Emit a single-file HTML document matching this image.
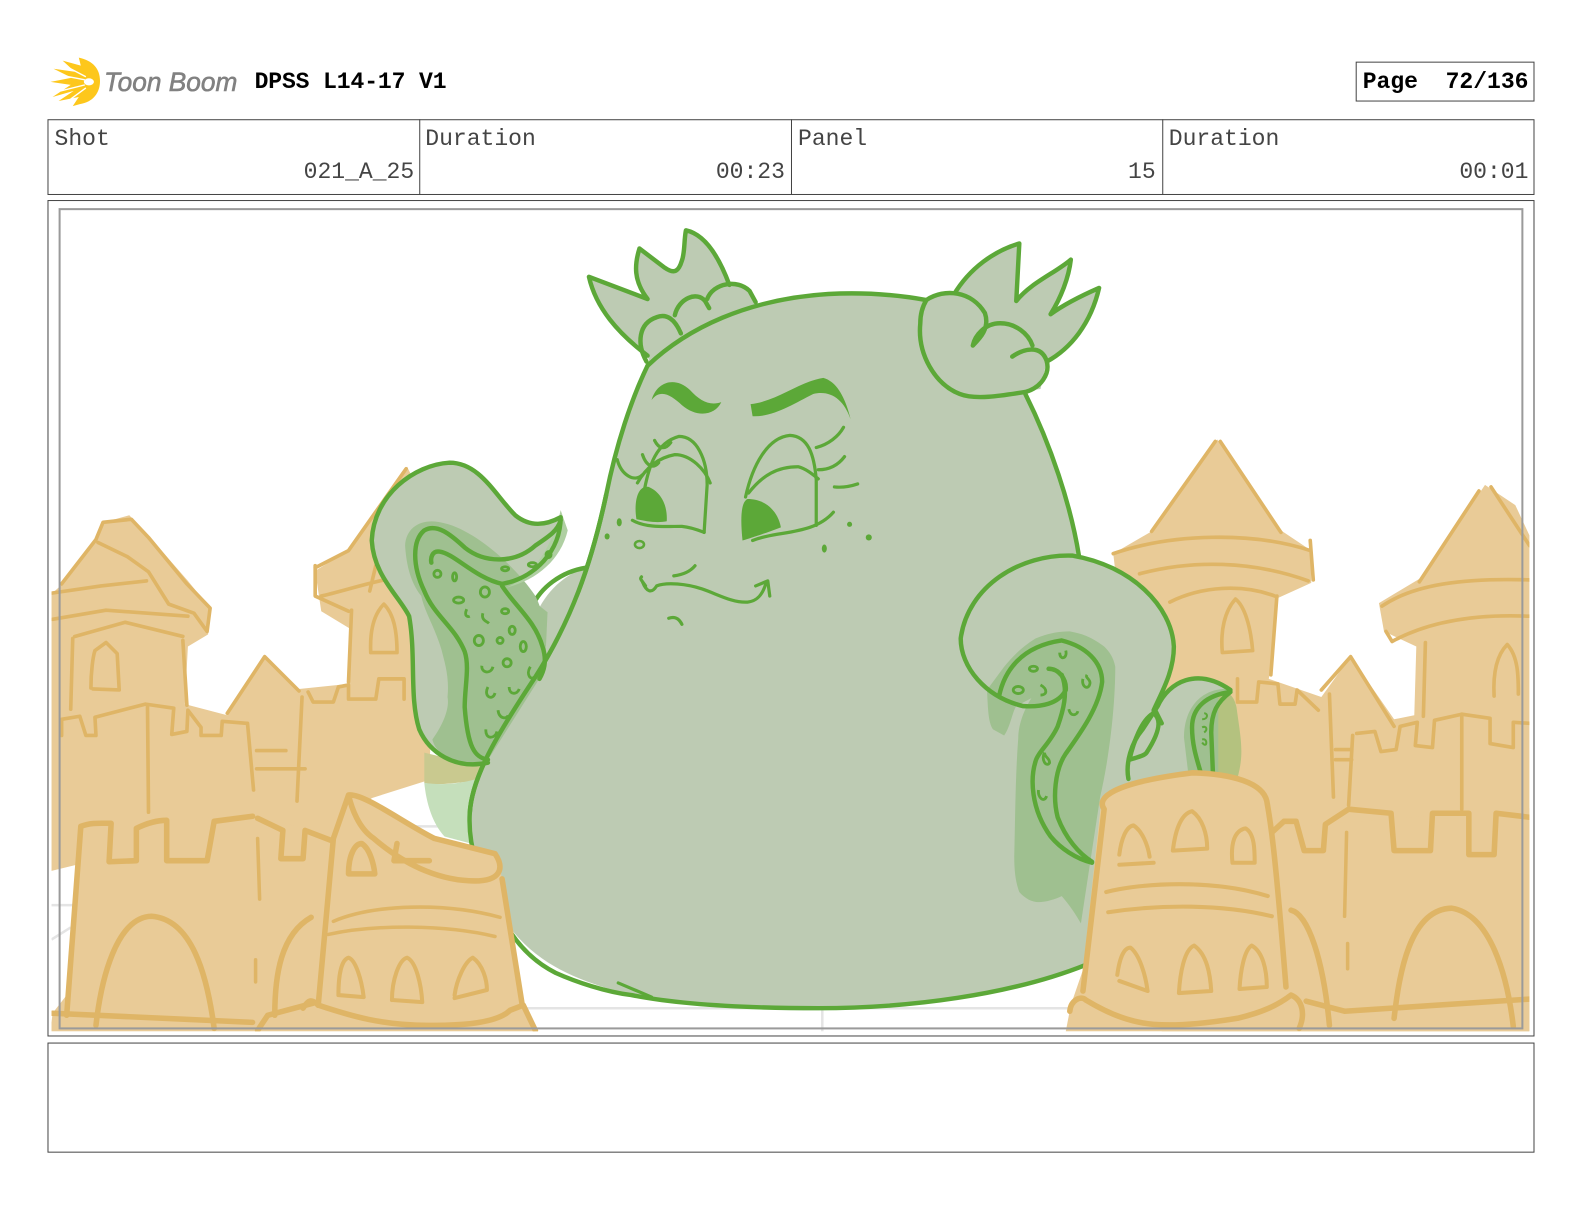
<!DOCTYPE html>
<html lang="en"><head><meta charset="utf-8"><title>DPSS L14-17 V1 - Page 72/136</title>
<style>
html,body{margin:0;padding:0;background:#fff}
svg{display:block}
.t{font-family:"Liberation Mono",monospace;font-size:22.8px;fill:#444}
.b{font-family:"Liberation Mono",monospace;font-size:22.8px;font-weight:bold;fill:#000}
.s{fill:none;stroke:#dfb566;stroke-width:5.5;stroke-linecap:round;stroke-linejoin:round}
.b3{fill:none;stroke:#dfb566;stroke-width:3.6;stroke-linecap:round;stroke-linejoin:round}
.s2{fill:none;stroke:#dfb566;stroke-width:3.5;stroke-linecap:round;stroke-linejoin:round}
.g{fill:none;stroke:#5ca838;stroke-width:4.4;stroke-linecap:round;stroke-linejoin:round}
.g2{fill:none;stroke:#5ca838;stroke-width:3.2;stroke-linecap:round;stroke-linejoin:round}
.f{fill:#5ca838}
</style></head><body>
<svg xmlns="http://www.w3.org/2000/svg" width="1584" height="1224" viewBox="0 0 1568 1211.6">
<defs><clipPath id="c"><rect x="51" y="205" width="1463" height="816"/></clipPath></defs>
<rect width="1568" height="1212" fill="#fff"/>

<!-- logo -->
<g fill="#fdc71c">
<path d="M99 80C99 92 92 101 79 103L72 105L78 96L58 100L73 90L52 96L70 84L50 81L71 77L53 68L74 71L62 60L80 65L78 57C92 60 99 68 99 80Z"/>
</g>
<ellipse cx="88" cy="81" rx="5" ry="3.5" fill="#fff"/>
<g stroke="#fff" stroke-width="1.4" fill="none"><path d="M85 76L66 66M84 79L58 74M84 84L60 90M85 87L70 98"/></g>
<text x="103" y="90" font-family="'Liberation Sans',sans-serif" font-style="italic" font-size="27" fill="#818181" stroke="#818181" stroke-width=".6" textLength="132" lengthAdjust="spacingAndGlyphs">Toon Boom</text>
<text x="252" y="87" class="b" textLength="190">DPSS L14-17 V1</text>
<rect x="1342.5" y="61.5" width="176" height="38.5" fill="none" stroke="#444" stroke-width="1"/>
<text x="1349" y="87" class="b" xml:space="preserve">Page  72/136</text>

<!-- table -->
<g fill="none" stroke="#444" stroke-width="1">
<rect x="47.5" y="118.5" width="1471" height="74"/>
<path d="M415.5 118V193M783.5 118V193M1151 118V193"/>
<rect x="47.5" y="198.5" width="1471" height="827"/>
<rect x="47.5" y="1032.5" width="1471" height="108"/>
</g>
<text x="54" y="143.500" class="t">Shot</text><text x="410" y="176" class="t" text-anchor="end">021_A_25</text>
<text x="421" y="143.500" class="t">Duration</text><text x="777" y="176" class="t" text-anchor="end">00:23</text>
<text x="790" y="143.500" class="t">Panel</text><text x="1144" y="176" class="t" text-anchor="end">15</text>
<text x="1157" y="143.500" class="t">Duration</text><text x="1513" y="176" class="t" text-anchor="end">00:01</text>

<g clip-path="url(#c)">
<!-- faint background lines -->
<g fill="none" stroke="#e4e4e4" stroke-width="2.5">
<path d="M51 896H72M51 930L70 918M400 818H470M520 998H1060M814 998V1021"/>
</g>

<!-- back sand left -->
<path fill="#e9cb97" d="M51 588L62 578L95 534L103 517L128 510L145 528L186 575L208 602L206 628L186 640L183 697L225 708L262 648L296 682L345 677L346 622L318 605L312 565L345 545L403 462L432 520L425 772L368 790L330 830L80 855L51 862Z"/>
<!-- back sand right -->
<path fill="#e9cb97" d="M1102 548L1140 526L1205 435L1268 525L1298 545L1298 577L1265 592L1256 672L1308 690L1337 650L1380 712L1400 708L1402 640L1370 625L1365 597L1410 570L1470 480L1500 500L1514 530V1021H1150L1120 700Z"/>

<g class="b3">
<path d="M61 578L95 534L102 517L130 514L147 532L185 578L208 602L205 625L192 607L167 598L147 566L126 551L97 537"/>
<path d="M52 587L100 580L145 575M52 613L105 604L186 610"/>
<path d="M72 632L70 702M181 634L185 698M74 630L124 616L181 630"/>
<path d="M90 681C90 665 92 650 94 644L105 636L116 647L118 683L92 682"/>
<path d="M61 728V712L79 709L85 728L95 728L94 710L144 697L172 701L170 727L185 724L186 703L199 720V728L219 728L220 714L244 716"/>
<path d="M245 716L251 782M146 698L147 804"/>
<path d="M254 743H283M254 761H302M299 690L294 793"/>
<path d="M225 706L262 650L296 684"/>
<path d="M305 685L310 695H330L335 680L345 678L345 692H372L375 672H400V692"/>
<path d="M345 675L348 604M312 560V590L345 605M312 562L345 545L402 464"/>
<path d="M318 590C340 585 370 575 400 570M366 585L372 560"/>
<path d="M367 646C366 625 370 608 380 598C390 608 393 625 393 646Z"/>
</g>

<!-- right back strokes -->
<g class="b3">
<path d="M1140 526L1203 437M1208 437L1268 527"/>
<path d="M1102 548C1160 528 1240 526 1297 545M1297 535L1300 574"/>
<path d="M1128 568C1180 554 1240 555 1295 575"/>
<path d="M1158 596C1190 580 1230 578 1262 590M1264 590L1258 668"/>
<path d="M1210 646C1208 625 1212 605 1223 593C1232 600 1238 620 1240 644Z"/>
<path d="M1225 672V695H1244L1246 675L1265 677L1267 697H1282L1284 683L1305 703M1316 687L1320 789"/>
<path d="M1308 683L1337 650L1380 719"/>
<path d="M1405 576L1464 486M1476 482L1514 540"/>
<path d="M1368 600C1400 578 1450 572 1514 574M1372 625L1378 635C1420 612 1470 608 1514 610"/>
<path d="M1411 636L1409 709"/>
<path d="M1479 689C1478 670 1480 650 1492 638C1503 650 1503 670 1503 687"/>
<path d="M1343 726L1361 724L1367 744L1382 742L1386 719L1403 715L1401 738L1418 740L1420 713L1447 707L1475 711L1475 736L1498 740L1498 715L1514 716"/>
<path d="M1339 728L1335 797M1447 707L1447 801M1322 742H1338M1322 752H1338"/>
</g>

<!-- left green patches -->
<path fill="#c9c98f" d="M420 745L482 760L472 773C450 775 432 778 420 775Z"/>
<path fill="#c5dfbb" d="M420 775C440 778 460 775 475 770L466 835L440 828C428 815 422 795 420 775Z"/>

<!-- horns left -->
<path fill="#bdcbb3" d="M641 352C612 330 590 305 583 274L641 296C627 278 628 262 633 246L658 265C668 272 672 268 675 258C678 250 677 238 679 228C698 232 712 255 722 282C738 282 746 290 750 300L760 420L660 420Z"/>
<path class="g" d="M641 352C612 330 590 305 583 274L641 296C627 278 628 262 633 246L658 265C668 272 672 268 675 258C678 250 677 238 679 228C698 232 712 255 722 282"/>
<path class="g" d="M640 358C630 340 632 320 650 314C660 310 668 316 674 330M668 312C672 295 690 288 698 298L702 305M700 296C706 280 730 276 742 288L748 299"/>

<!-- horns right -->
<path fill="#bdcbb3" d="M944 292C960 265 985 248 1009 241L1006 298C1020 280 1045 270 1060 257C1058 275 1050 295 1040 311C1055 300 1072 292 1088 285C1080 320 1060 345 1036 358L1030 385L960 394L912 360L908 320L920 295Z"/>
<path class="g" d="M944 292C960 265 985 248 1009 241L1006 298C1020 280 1045 270 1060 257C1058 275 1050 295 1040 311C1055 300 1072 292 1088 285C1080 320 1060 345 1036 358"/>

<!-- body -->
<path fill="#bdcbb3" d="M641 362C680 325 740 296 820 291C860 289 890 292 917 297L1015 390C1040 440 1060 500 1068 550L1120 900L1075 955C1000 985 900 998 810 998C720 998 640 990 600 978C560 965 525 950 495 905C475 870 463 840 465 805C467 770 490 730 530 670C565 615 585 560 600 490C610 440 625 395 641 362Z"/>
<path class="g" d="M641 362C680 325 740 296 820 291C860 289 890 292 917 297"/>
<path class="g" d="M1015 390C1040 440 1060 500 1068 550"/>
<path class="g" d="M1075 955C1000 985 900 998 810 998C730 998 670 994 625 985C600 982 570 972 550 963C530 953 510 935 495 905C475 870 463 840 465 805C467 770 490 730 530 670C565 615 585 560 600 490C610 440 625 395 641 362"/>
<path class="g2" d="M612 973L645 987"/>

<!-- bun right -->
<path fill="#bdcbb3" d="M917 297C935 285 960 288 972 305L985 320C1005 318 1025 330 1030 345C1040 355 1036 375 1015 388C990 395 960 393 950 390C925 380 910 355 911 320Z"/>
<path class="g" d="M917 297C935 285 962 288 975 310C980 325 970 335 963 342C965 332 975 320 990 320C1005 320 1018 330 1022 342M1002 353C1012 346 1030 340 1036 357C1040 370 1030 384 1015 388C990 392 965 396 950 390C925 380 908 350 911 320C911 310 914 302 917 297"/>

<!-- brows -->
<path class="f" d="M645 396C650 378 668 372 683 386C693 397 703 402 714 398C708 411 690 414 675 401C665 392 654 384 645 396Z"/>
<path class="f" d="M743 400C770 397 790 378 815 374C830 378 838 398 842 415C835 395 822 386 805 390C785 400 765 413 745 412Z"/>

<!-- left eye -->
<path class="g2" d="M637 490C642 460 650 438 672 432C690 432 700 455 700 480L697 527"/>
<path class="g2" d="M631 478C640 462 652 453 668 450C684 450 698 465 703 478"/>
<path class="g2" d="M626 515C640 523 660 521 675 521C685 522 692 525 697 527"/>
<path class="f" d="M630 514C627 495 632 480 642 482C654 487 661 500 660 516C650 518 640 516 630 514Z"/>
<path class="g2" d="M611 455C615 470 628 478 636 470M636 450C640 462 647 464 652 458M648 436C652 444 658 446 664 438"/>
<!-- right eye -->
<path class="g2" d="M738 492C745 460 760 433 782 431C800 432 806 450 808 475L808 520"/>
<path class="g2" d="M741 488C755 470 770 462 790 462C798 464 805 470 810 474"/>
<path class="g2" d="M745 535C770 525 805 530 825 507"/>
<path class="f" d="M735 535C733 515 733 497 740 494C758 494 770 506 773 522C760 527 745 532 735 535Z"/>
<path class="g2" d="M808 443C820 440 830 432 835 423M810 465C822 465 830 460 836 452M826 482C835 483 843 481 849 479" />
<!-- freckles -->
<g class="f">
<ellipse cx="613" cy="517" rx="2.5" ry="4"/><ellipse cx="601" cy="531" rx="2.5" ry="3"/>
<ellipse cx="841" cy="519" rx="2.5" ry="2.5"/><ellipse cx="860" cy="532" rx="3" ry="3"/><ellipse cx="816" cy="543" rx="2.5" ry="4"/>
</g>
<ellipse cx="633" cy="539" rx="4.5" ry="3.5" fill="#bdcbb3" stroke="#5ca838" stroke-width="2.5"/>
<!-- mouth -->
<path class="g2" d="M639 580C635 574 633 573 635 571M636 576C640 586 645 588 650 580C660 576 680 578 695 583C710 588 725 597 740 596C750 595 755 588 758 578M748 580L760 575L762 590M667 570C675 569 683 566 688 560M662 612C668 610 672 612 675 618"/>

<!-- left arm -->
<path fill="#bdcbb3" d="M530 610C540 585 560 568 580 562L568 610L540 655Z"/>
<path fill="#9fc090" d="M524 592L542 606L540 650L530 660Z"/>
<path class="g" d="M527 600C535 582 555 566 580 562"/>

<!-- left tentacle -->
<path fill="#bdcbb3" d="M480 755C450 760 425 745 415 720C405 690 410 650 405 610C395 590 370 570 368 535C370 490 410 460 445 458C475 458 490 490 510 510C525 522 540 520 555 510C555 540 540 560 500 580L540 640L535 670L480 755Z"/>
<path fill="#9fc090" d="M401 540C402 520 420 512 440 518C470 525 510 560 530 590C545 620 540 650 535 670L480 757L445 752C435 745 430 740 428 732C440 715 445 700 443 690C445 670 440 655 437 643C430 620 420 605 417 590C405 575 402 555 401 540Z"/>
<path fill="#afcfa2" d="M555 505L562 525C555 555 530 575 500 582C520 575 545 550 555 505Z"/>
<path class="g" d="M483 755C450 762 425 745 415 722C405 690 412 650 405 610C395 590 370 570 368 535C370 490 410 460 445 458C475 458 490 490 510 510C525 522 540 520 555 512C555 545 530 572 497 578C470 572 450 548 435 546C428 545 426 552 427 557"/>
<path class="g" d="M483 752C470 750 463 740 460 700C460 680 465 660 460 645C450 620 430 610 420 585C408 560 408 535 420 525C432 518 445 528 460 542C480 558 510 558 530 540C545 530 552 525 555 515"/>
<path class="g" d="M497 580C510 600 530 615 537 640C542 655 538 665 534 672"/>
<g fill="none" stroke="#5ca838" stroke-width="2.8">
<ellipse cx="433" cy="568" rx="3.5" ry="3.5"/><ellipse cx="450" cy="571" rx="2" ry="4"/><ellipse cx="454" cy="594" rx="5" ry="3"/>
<ellipse cx="480" cy="586" rx="4.5" ry="5"/><ellipse cx="500" cy="605" rx="3.5" ry="2.5"/><ellipse cx="507" cy="624" rx="3" ry="4"/>
<ellipse cx="474" cy="634" rx="4.5" ry="5"/><ellipse cx="495" cy="634" rx="3" ry="3"/><ellipse cx="518" cy="640" rx="3" ry="5"/>
<ellipse cx="502" cy="656" rx="4" ry="4"/><ellipse cx="500" cy="563" rx="3.5" ry="2"/><ellipse cx="527" cy="559" rx="4" ry="2"/><ellipse cx="543" cy="549" rx="2.5" ry="3"/>
<path d="M462 603C459 610 463 611 465 610M478 607C476 614 482 615 484 617M477 659C476 666 486 668 488 660M525 660C520 668 526 674 529 670M483 680C478 690 488 694 490 686M504 680C504 688 512 688 514 682M493 703C494 712 502 712 503 708M481 722C480 732 490 732 492 724"/>
</g>
<path class="g" d="M465 805C467 770 490 730 530 670C565 615 585 560 600 490"/>

<!-- right tentacle -->
<path fill="#bdcbb3" d="M1162 640C1160 600 1120 560 1062 550C1010 548 960 580 951 632C950 665 985 695 1013 699L1040 700L1085 855L1120 830L1150 690Z"/>
<path fill="#9fc090" d="M977 683C978 700 978 715 983 722L994 728C1000 720 1002 705 1006 699L1021 691C1012 705 1008 720 1008 730C1005 770 1005 810 1004 848C1004 865 1006 875 1009 883C1015 890 1022 893 1028 893C1035 893 1045 890 1051 887C1058 895 1065 905 1070 914L1089 789C1098 750 1104 700 1104 660C1102 650 1098 645 1093 640C1080 630 1070 627 1059 625C1045 625 1035 628 1025 632C1012 640 1002 650 994 660Z"/>
<path class="g" d="M1142 703C1150 685 1162 665 1162 640C1160 600 1120 560 1062 550C1010 548 958 580 951 632C951 660 975 690 1013 699C1030 700 1048 697 1055 683C1056 672 1048 662 1038 662"/>
<path class="g" d="M989 689C994 665 1010 640 1051 634C1075 640 1091 655 1091 675C1088 700 1070 725 1055 746C1044 762 1042 790 1047 809C1055 830 1068 845 1081 853"/>
<path class="g" d="M1051 668C1058 685 1052 705 1047 719C1040 735 1027 745 1025 754C1020 770 1020 800 1040 828C1050 840 1065 850 1081 854"/>
<g fill="none" stroke="#5ca838" stroke-width="2.8">
<ellipse cx="1008" cy="683" rx="5" ry="3.5"/><ellipse cx="1023" cy="662" rx="4" ry="2.5"/>
<path d="M1030 678C1037 682 1037 688 1030 688M1049 646C1049 654 1057 652 1055 644M1072 672C1070 680 1078 684 1079 676C1079 672 1074 671 1076 668M1058 702C1060 710 1066 708 1067 704M1034 745C1030 752 1036 760 1039 755C1039 750 1034 750 1034 745M1028 782C1027 790 1034 795 1036 788"/>
</g>

<!-- small right tentacle -->
<path fill="#bdcbb3" d="M1117 775C1115 745 1130 720 1146 699C1160 675 1190 660 1218 683L1205 780Z"/>
<path fill="#9fc090" d="M1172 730C1172 700 1190 680 1218 682L1210 780H1178Z"/>
<path fill="#b4c27f" d="M1206 690C1215 680 1222 690 1224 700C1228 730 1232 745 1225 770L1206 765Z"/>
<path class="g" d="M1117 771C1114 755 1120 735 1131 722L1146 699C1157 675 1185 660 1218 683"/>
<path class="g" d="M1118 752C1125 750 1133 748 1135 745C1148 725 1150 712 1142 706C1130 712 1122 735 1118 752ZM1143 702L1150 716"/>
<path class="g" d="M1218 685C1195 688 1180 700 1180 720C1180 740 1186 755 1191 773M1218 685C1205 695 1199 705 1199 725L1201 773"/>
<g fill="none" stroke="#5ca838" stroke-width="2"><path d="M1190 712C1196 712 1196 706 1192 706M1190 735C1195 742 1196 730 1190 732M1192 725C1196 722 1194 718 1190 720"/></g>

<!-- front left castle -->
<path fill="#e9cb97" d="M80 818L250 806L328 828L345 785L432 828L492 845L497 870L517 990L530 1021H50L52 1003L66 985Z"/>
<path fill="#e9cb97" d="M1090 795C1100 775 1150 765 1180 765C1220 768 1250 775 1258 800L1262 1021H1055L1060 995L1072 960Z"/>
<path fill="#e9cb97" d="M1255 820L1514 800V1021H1262Z"/>
<g class="s">
<path d="M66 1005L80 818C90 814 100 815 110 815L108 853L135 852L135 820C145 815 155 812 165 812L165 852L205 852L212 813L250 808M255 810L280 822L278 850L300 850L302 822L328 832"/>
<path d="M95 1015C100 970 115 908 150 907C190 910 205 965 212 1018"/>
<path d="M52 1003L250 1012M255 1020L265 1005L310 993"/>
<path d="M272 1005C272 965 278 925 308 908"/>
<path d="M345 787L330 830L315 995M345 787C360 785 400 815 430 830L490 845C500 860 495 872 470 872C440 872 405 860 370 830C355 820 348 800 345 787"/>
<path d="M497 870L517 995M345 865C345 845 352 835 358 835C366 840 370 855 371 865ZM393 835L390 852L425 852"/>
<path d="M300 998C305 990 308 988 315 995C345 1005 380 1016 430 1015C470 1015 495 1010 505 1000L518 995L530 1020"/>
</g>
<g class="s2">
<path d="M330 912C370 895 440 893 495 908M325 925C370 915 440 915 490 927M255 830L257 890M253 950L253 972"/>
<path stroke-width="4" d="M335 985C335 965 338 950 345 948C352 950 358 970 360 987L335 985M388 990C388 970 395 950 403 948C412 952 417 975 418 992L390 990M450 985C452 970 460 952 468 948C478 955 482 970 482 980L450 988"/>
</g>

<!-- front right -->
<g class="s">
<path d="M1072 981L1093 801C1085 790 1100 775 1180 765C1220 766 1250 775 1254 793C1258 815 1262 840 1273 977"/>
<path d="M1059 1001C1060 990 1070 985 1075 990C1100 1005 1120 1012 1142 1014C1170 1016 1200 1012 1225 1008C1250 1002 1265 995 1278 985C1290 990 1292 1005 1286 1018"/>
<path d="M1259 824L1271 813H1283L1291 842H1310L1312 816L1335 801L1377 805L1380 842H1416L1418 805H1454L1454 846H1479L1481 805L1514 809"/>
<path d="M1380 1008C1385 965 1395 900 1437 899C1475 905 1492 965 1498 1016"/>
<path d="M1293 991L1331 1001L1514 989M1278 901C1295 905 1310 950 1316 1015"/>
</g>
<g class="s2">
<path stroke-width="4" d="M1095 883C1130 874 1200 870 1255 887M1097 903C1150 895 1210 895 1259 907"/>
<path stroke-width="4" d="M1108 846C1110 830 1115 818 1122 817C1130 822 1136 835 1138 848M1108 856L1142 854M1161 842C1163 825 1168 806 1180 803C1190 810 1195 825 1195 840L1161 842M1220 854C1218 835 1222 822 1233 820C1242 825 1242 842 1242 854L1220 854"/>
<path stroke-width="4" d="M1106 965C1108 950 1112 938 1119 938C1128 945 1134 965 1136 981L1108 971M1167 983C1168 965 1172 940 1182 936C1195 945 1198 965 1199 981L1167 983M1227 979C1228 960 1232 940 1239 936C1250 942 1254 960 1254 977L1227 979"/>
<path d="M1333 824L1331 907M1334 934V959"/>
</g>
</g>

<!-- inner frame -->
<rect x="59" y="207" width="1448" height="811" fill="none" stroke="#9a9a9a" stroke-width="2"/>
</svg>
</body></html>
